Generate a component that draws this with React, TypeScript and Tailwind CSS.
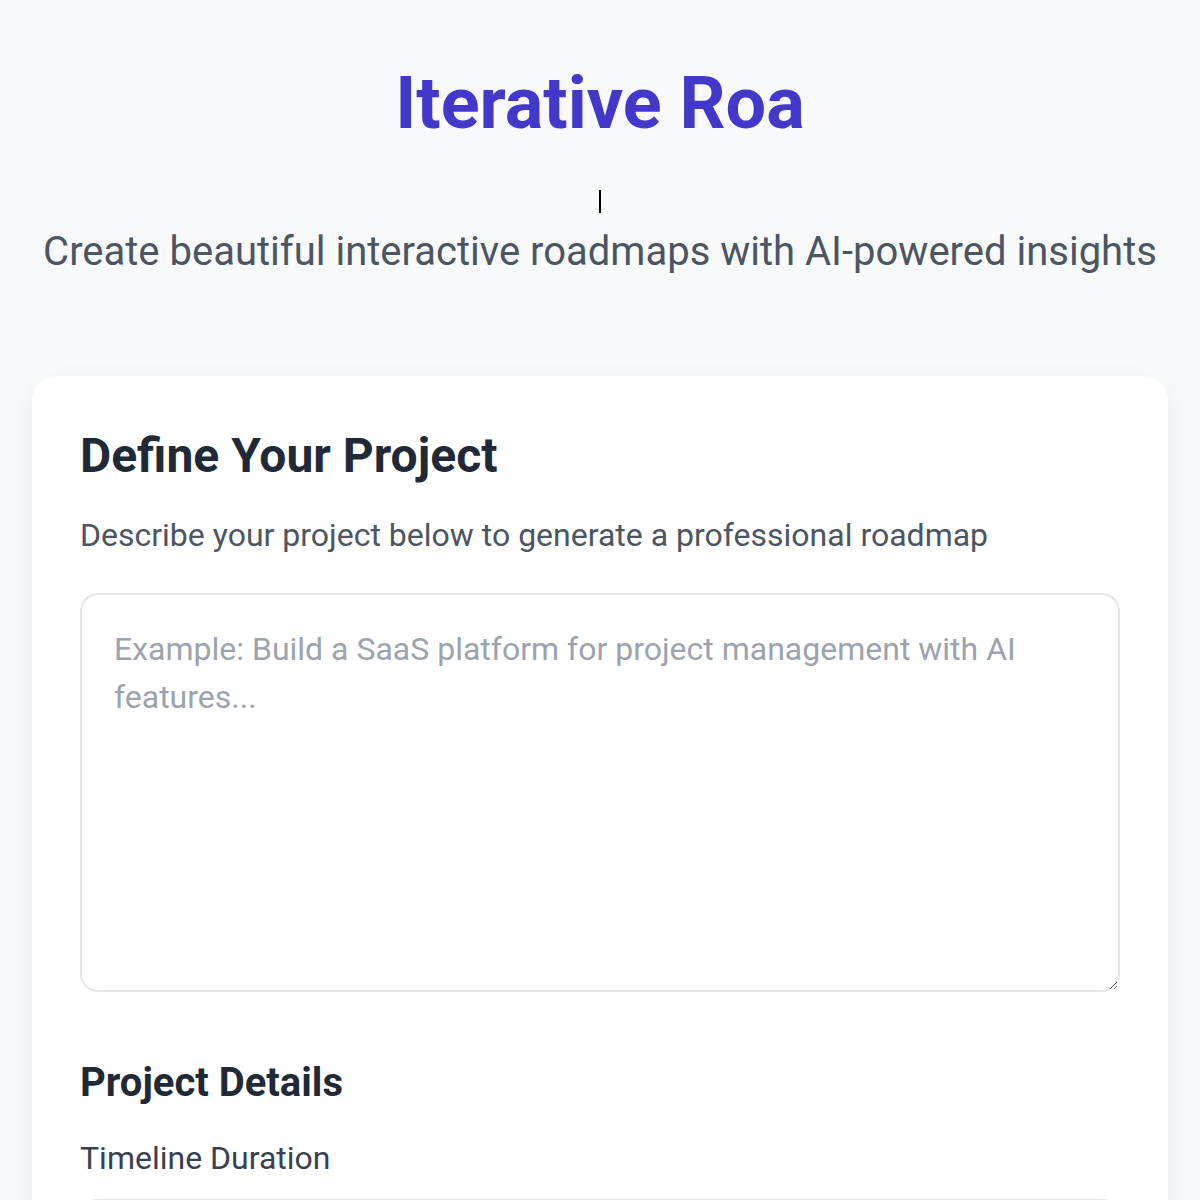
import { useState } from 'react';

const App = () => {
  const [description, setDescription] = useState('');
  const [duration, setDuration] = useState('');

  return (
    <div className="min-h-screen bg-[#f8f9fb] font-['Roboto','Liberation_Sans',sans-serif]">
      <div className="px-[32px] pt-[68px] pb-[48px]">
        <header className="flex flex-col items-center text-center">
          <h1 className="text-[72px] font-bold leading-none text-[#4338ca]">Iterative Roa</h1>
          {/* typing cursor */}
          <div className="mt-[50px] h-[23px] w-[2px] bg-black" />
          <p className="mt-[9px] text-[40px] leading-[60px] text-[#4b5563]">
            Create beautiful interactive roadmaps with AI-powered insights
          </p>
        </header>

        <main className="mt-[94px] rounded-[24px] bg-white px-[48px] pt-[48px] pb-[48px] shadow-[0_10px_30px_rgba(15,23,42,0.06)]">
          <h2 className="text-[48px] font-bold leading-[64px] text-[#1f2937]">Define Your Project</h2>
          <p className="mt-[23px] text-[32px] leading-[48px] text-[#4b5563]">
            Describe your project below to generate a professional roadmap
          </p>

          <textarea
            value={description}
            onChange={e => setDescription(e.target.value)}
            placeholder="Example: Build a SaaS platform for project management with AI features..."
            className="mt-[34px] block h-[399px] w-full resize-y rounded-[18px] border-2 border-[#e5e7eb] bg-white px-[32px] py-[30px] text-[32px] leading-[48px] text-[#1f2937] placeholder:text-[#9ca3af] outline-none"
          />

          <section className="mt-[67px]">
            <h3 className="text-[40px] font-bold leading-[48px] text-[#1f2937]">Project Details</h3>
            <label className="mt-[27px] block text-[32px] leading-[48px] text-[#374151]">Timeline Duration</label>
            <input
              value={duration}
              onChange={e => setDuration(e.target.value)}
              className="mt-[17px] block h-[72px] w-full rounded-[18px] border-2 border-[#e5e7eb] bg-white px-[24px] text-[32px] outline-none"
            />
          </section>
        </main>
      </div>
    </div>
  );
};

export default App;
